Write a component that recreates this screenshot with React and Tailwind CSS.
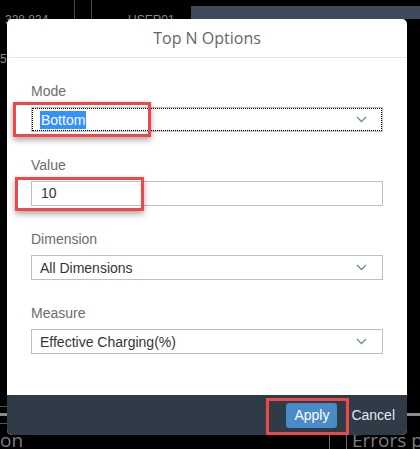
// App.jsx
// Top N Options dialog over a dark dashboard, with red callout boxes

function Chevron() {
  return (
    <svg width="11" height="7" viewBox="0 0 11 7" className="shrink-0">
      <path d="M1 1 L5.5 5.5 L10 1" fill="none" stroke="#6a8bb0" strokeWidth="1.3" />
    </svg>
  )
}

function Field({ label, children, first }) {
  return (
    <div className={first ? "" : "mt-[24px]"}>
      <div className="h-[18px] leading-[18px] text-[14px] text-[#6a6d70] mb-[7px]">{label}</div>
      {children}
    </div>
  )
}

function Select({ value, focused }) {
  return (
    <div className={"h-[25px] flex items-center justify-between pl-[8px] pr-[15px] bg-white " + (focused ? "border border-[#bfbfbf] outline-1 outline-dotted outline-black -outline-offset-2" : "border border-[#bfbfbf]")}>
      {focused ? (
        <span className="text-[14px] leading-[18px] bg-[#3390ff] text-white px-[1px]">{value}</span>
      ) : (
        <span className="text-[14px] leading-[18px] text-[#32363a]">{value}</span>
      )}
      <Chevron />
    </div>
  )
}

export default function App() {
  return (
    <div className="relative w-[420px] h-[449px] bg-black overflow-hidden" style={{ fontFamily: '"Liberation Sans", Arial, sans-serif' }}>

      {/* dashboard behind the dialog */}
      <div className="absolute left-[5px] top-[11px] text-[12px] text-[#8a8a8a]">328,834</div>
      <div className="absolute left-[74px] top-0 w-px h-[19px] bg-[#4a4a4a]" />
      <div className="absolute left-[91px] top-0 w-px h-[19px] bg-[#4a4a4a]" />
      <div className="absolute left-[128px] top-[11px] text-[12px] text-[#8a8a8a]">USER01</div>
      <div className="absolute left-[191px] top-[6px] right-0 h-[13px] bg-[#3f4b58]" />
      <div className="absolute left-0 top-[50px] text-[12px] text-[#8a8a8a]">5,</div>

      <div className="absolute left-0 top-[406px] w-[7px] h-px bg-[#555]" />
      <div className="absolute left-0 top-[413px] w-[7px] h-[3px] bg-[#8a8a8a]" />
      <div className="absolute left-0 top-[423px] w-[7px] h-px bg-[#555]" />
      <div className="absolute left-[407px] top-[413px] right-0 h-[3px] bg-[#8a8a8a]" />
      <div className="absolute left-0 top-[431px] text-[19px] leading-[18px] text-[#7d7d7d]" style={{ fontFamily: '"Open Sans", sans-serif' }}>on</div>
      <div className="absolute left-[318px] top-[425px] w-[12px] h-[30px] rounded-full border-r border-[#6a6a6a]" />
      <div className="absolute left-[346px] top-[425px] w-[12px] h-[30px] rounded-full border-l border-[#6a6a6a]" />
      <div className="absolute left-[352px] top-[431px] text-[19px] leading-[18px] text-[#7d7d7d] whitespace-nowrap" style={{ fontFamily: '"Open Sans", sans-serif' }}>Errors pe</div>

      {/* dialog */}
      <div className="absolute left-[7px] top-[19px] w-[400px] h-[416px] flex flex-col rounded-[5px] overflow-hidden bg-white">
        <div className="h-[39px] shrink-0 flex items-center justify-center border-b border-[#e5e5e5] text-[16px] text-[#666]" style={{ fontFamily: '"Open Sans", sans-serif' }}>
          Top N Options
        </div>
        <div className="flex-1 px-[24px] pt-[24px]">
          <Field label="Mode" first>
            <Select value="Bottom" focused />
          </Field>
          <Field label="Value">
            <div className="h-[25px] flex items-center pl-[9px] border border-[#bfbfbf] text-[14px] text-[#32363a]">10</div>
          </Field>
          <Field label="Dimension">
            <Select value="All Dimensions" />
          </Field>
          <Field label="Measure">
            <Select value="Effective Charging(%)" />
          </Field>
        </div>
        <div className="h-[40px] shrink-0 bg-[#2f3b47] flex items-center justify-end pr-[12px] gap-[14px]">
          <button className="h-[25px] w-[51px] rounded-[3px] bg-[#4a8ac7] text-white text-[14px]">Apply</button>
          <span className="text-[14px] text-[#e5e9ee]">Cancel</span>
        </div>
      </div>

      {/* red callouts */}
      <div className="absolute left-[13px] top-[102px] w-[138px] h-[35px] border-[3px] border-[#f04848] shadow-[0_3px_6px_rgba(0,0,0,0.35)]" />
      <div className="absolute left-[15px] top-[177px] w-[129px] h-[34px] border-[3px] border-[#f04848] shadow-[0_3px_6px_rgba(0,0,0,0.35)]" />
      <div className="absolute left-[266px] top-[398px] w-[83px] h-[37px] border-[3px] border-[#f04848]" />
    </div>
  )
}
